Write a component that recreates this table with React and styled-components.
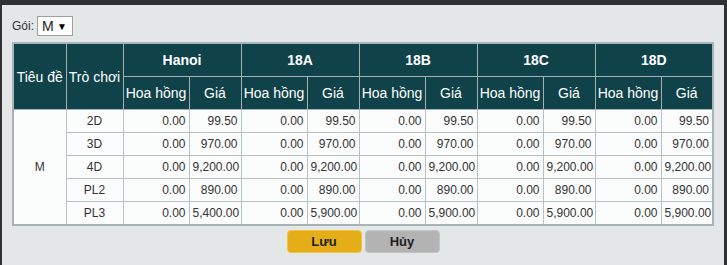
import React from 'react';
import styled, { createGlobalStyle } from 'styled-components';

const GlobalStyle = createGlobalStyle`
  html, body {
    margin: 0;
    padding: 0;
    background: #2f3132;
    font-family: "Liberation Sans", Arial, sans-serif;
  }
`;

const markets = ['Hanoi', '18A', '18B', '18C', '18D'];

const rows = [
  { game: '2D', prices: ['99.50', '99.50', '99.50', '99.50', '99.50'] },
  { game: '3D', prices: ['970.00', '970.00', '970.00', '970.00', '970.00'] },
  { game: '4D', prices: ['9,200.00', '9,200.00', '9,200.00', '9,200.00', '9,200.00'] },
  { game: 'PL2', prices: ['890.00', '890.00', '890.00', '890.00', '890.00'] },
  { game: 'PL3', prices: ['5,400.00', '5,900.00', '5,900.00', '5,900.00', '5,900.00'] },
];

const App = () => {
  return (
    <StPage>
      <GlobalStyle />
      <StDialog>
        <StFilter>
          <span>Gói:</span>
          <StSelect>
            <span>M</span>
            <StArrow>▼</StArrow>
          </StSelect>
        </StFilter>

        <StTable>
          <colgroup>
            <col style={{ width: 53 }} />
            <col style={{ width: 57 }} />
            {markets.map((m) => (
              <React.Fragment key={m}>
                <col style={{ width: 66 }} />
                <col style={{ width: 52 }} />
              </React.Fragment>
            ))}
          </colgroup>
          <thead>
            <tr>
              <StTh rowSpan={2}>Tiêu đề</StTh>
              <StTh rowSpan={2}>Trò chơi</StTh>
              {markets.map((m) => (
                <StTh key={m} colSpan={2} $bold>
                  {m}
                </StTh>
              ))}
            </tr>
            <tr>
              {markets.map((m) => (
                <React.Fragment key={m}>
                  <StTh>Hoa hồng</StTh>
                  <StTh>Giá</StTh>
                </React.Fragment>
              ))}
            </tr>
          </thead>
          <tbody>
            {rows.map((row, i) => (
              <tr key={row.game}>
                {i === 0 && <StTd rowSpan={rows.length} $center>M</StTd>}
                <StTd $center>{row.game}</StTd>
                {row.prices.map((price, j) => (
                  <React.Fragment key={j}>
                    <StTd>0.00</StTd>
                    <StTd>{price}</StTd>
                  </React.Fragment>
                ))}
              </tr>
            ))}
          </tbody>
        </StTable>

        <StActions>
          <StButton $variant="save">Lưu</StButton>
          <StButton $variant="cancel">Hủy</StButton>
        </StActions>
      </StDialog>
    </StPage>
  );
};

export default App;

const StPage = styled.div`
  width: 727px;
  height: 265px;
  padding: 5px 3px 0 2px;
  box-sizing: border-box;
  overflow: hidden;
`;

const StDialog = styled.div`
  width: 722px;
  height: 260px;
  background-color: #e4e7e8;
  padding: 11px 10px 0 10px;
  box-sizing: border-box;
`;

const StFilter = styled.div`
  display: flex;
  align-items: center;
  gap: 3px;
  font-size: 12px;
  color: #333;
  height: 20px;
  margin-bottom: 6px;
`;

const StSelect = styled.div`
  display: flex;
  align-items: center;
  justify-content: space-between;
  width: 36px;
  height: 20px;
  box-sizing: border-box;
  padding: 0 5px 0 4px;
  background-color: #fff;
  border: 1px solid #a0a0a0;
  font-size: 14px;
  color: #222;
`;

const StArrow = styled.span`
  font-size: 10px;
  color: #000;
`;

const StTable = styled.table`
  width: 702px;
  table-layout: fixed;
  border-collapse: collapse;
  border: 2px solid #a8b3b5;
  background-color: #fbfcfc;
`;

const StTh = styled.th`
  height: 32px;
  padding: 0 1px;
  background-color: #0f4249;
  color: #fff;
  font-size: 14px;
  font-weight: ${(p) => (p.$bold ? 'bold' : 'normal')};
  text-align: center;
  white-space: nowrap;
  border: 1px solid #a1b1b4;
`;

const StTd = styled.td`
  height: 22px;
  padding: 0 3px;
  font-size: 12px;
  color: #333;
  text-align: ${(p) => (p.$center ? 'center' : 'right')};
  white-space: nowrap;
  border: 1px solid #b7c2c4;
`;

const StActions = styled.div`
  display: flex;
  justify-content: center;
  gap: 3px;
  margin-top: 4px;
`;

const StButton = styled.button`
  width: 75px;
  height: 23px;
  box-sizing: border-box;
  border-radius: 4px;
  font-family: "Liberation Sans", Arial, sans-serif;
  font-size: 13px;
  font-weight: bold;
  color: #1e1e1e;
  cursor: pointer;
  background-color: ${(p) => (p.$variant === 'save' ? '#e5ae18' : '#b3b3b3')};
  border: 1px solid ${(p) => (p.$variant === 'save' ? '#f2c443' : '#c4c4c4')};
`;
